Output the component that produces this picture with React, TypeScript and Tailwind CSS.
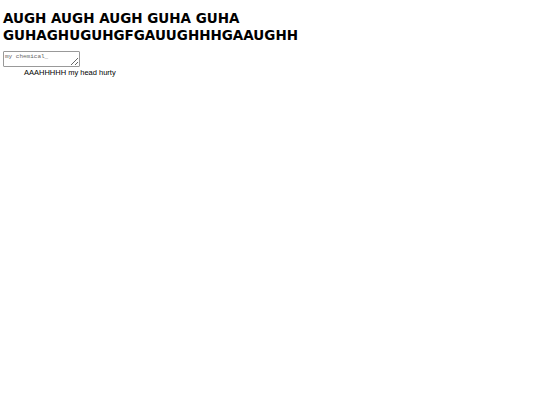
export default function App() {
  return (
    <div className="bg-white w-[540px] h-[405px] px-[3px] pt-[10px] font-['DejaVu_Sans',sans-serif]">
      <h1 className="text-[13.5px] font-bold leading-[17px] text-black">
        AUGH AUGH AUGH GUHA GUHA
        <br />
        GUHAGHUGUHGFGAUUGHHHGAAUGHH
      </h1>
      <textarea
        placeholder="my chemical_"
        className="mt-[7px] block w-[77px] h-[16px] border border-[#999] rounded-[1px] text-[6px] leading-[7px] px-[1px] py-[1px] resize-y placeholder:text-[#666] font-['Liberation_Mono',monospace]"
      />
      <p className="pl-[21px] mt-[1px] text-[7.5px] leading-[9px] text-black font-['Liberation_Sans',sans-serif]">
        AAAHHHHH my head hurty
      </p>
    </div>
  );
}
